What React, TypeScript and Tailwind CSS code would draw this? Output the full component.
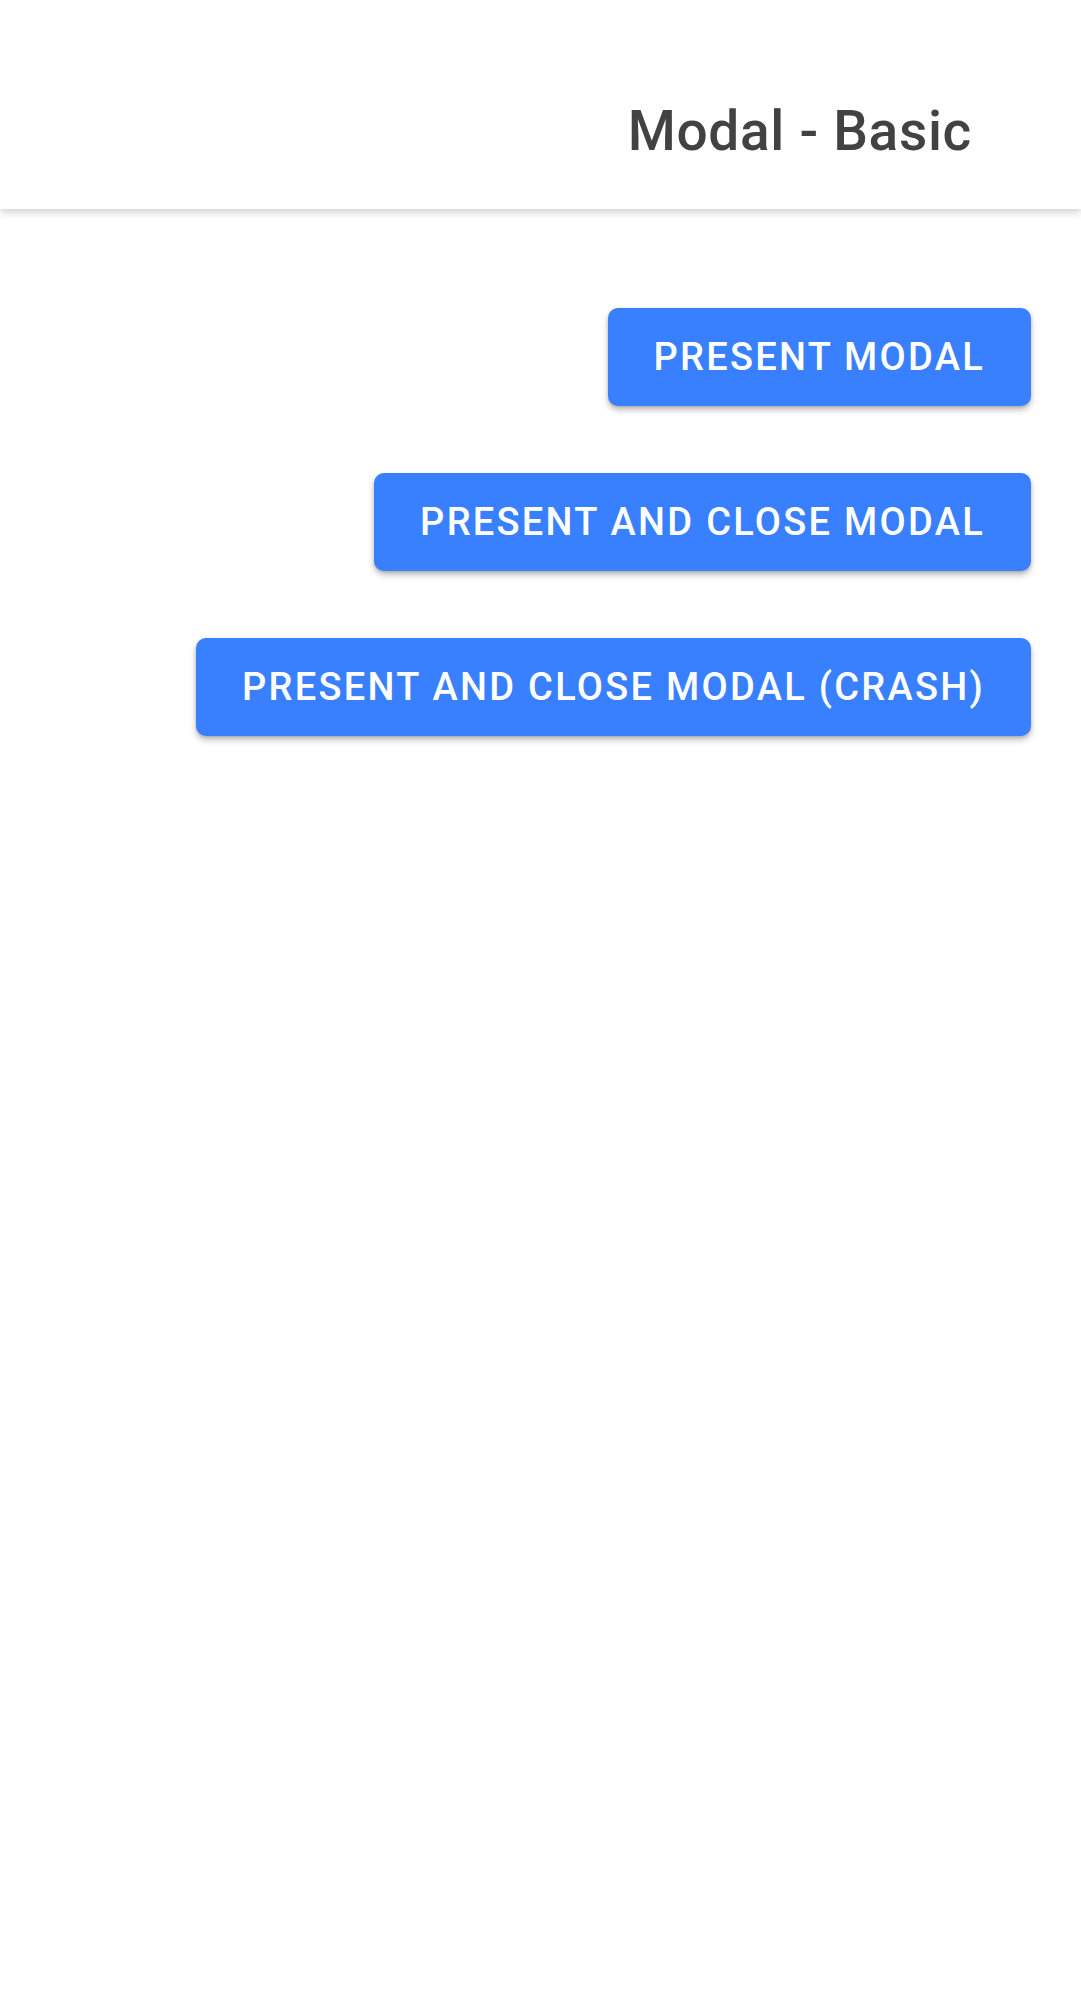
export default function App() {
  const buttons = [
    "Present modal",
    "Present and close modal",
    "Present and close modal (crash)",
  ];

  return (
    <div className="min-h-[1999px] bg-white" style={{ fontFamily: "Roboto, 'Noto Sans', sans-serif" }}>
      <header className="relative z-10 flex h-[209px] items-start justify-end bg-white pr-[109px] pt-[92px] shadow-[0_3px_8px_rgba(0,0,0,0.2)]">
        <h1 className="text-[55px] font-medium leading-[78px] tracking-[0.0125em] text-[#424242]">
          Modal - Basic
        </h1>
      </header>

      <main className="flex flex-col items-end gap-[67px] pr-[50px] pt-[99px]">
        {buttons.map((label) => (
          <button
            key={label}
            className="flex h-[98px] items-center rounded-[10px] bg-[#3880ff] px-[46px] text-[38px] font-medium uppercase tracking-[0.06em] text-white shadow-[0_4px_6px_rgba(0,0,0,0.25),0_1px_3px_rgba(0,0,0,0.15)]"
          >
            {label}
          </button>
        ))}
      </main>
    </div>
  );
}
